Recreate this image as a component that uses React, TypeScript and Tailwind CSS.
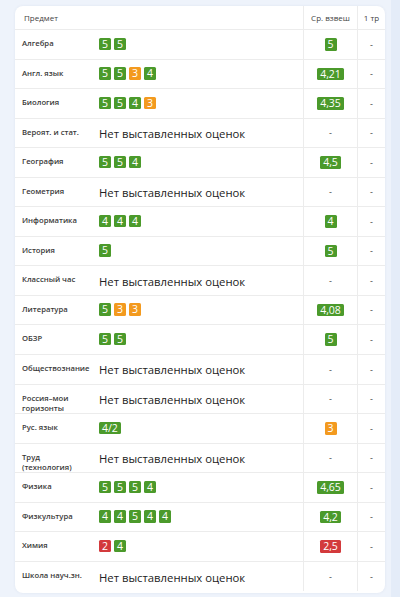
import React from "react";

type Row = {
  name: string;
  marks: string[] | null;
  avg: string | null;
};

const rows: Row[] = [
  { name: "Алгебра", marks: ["5", "5"], avg: "5" },
  { name: "Англ. язык", marks: ["5", "5", "3", "4"], avg: "4,21" },
  { name: "Биология", marks: ["5", "5", "4", "3"], avg: "4,35" },
  { name: "Вероят. и стат.", marks: null, avg: null },
  { name: "География", marks: ["5", "5", "4"], avg: "4,5" },
  { name: "Геометрия", marks: null, avg: null },
  { name: "Информатика", marks: ["4", "4", "4"], avg: "4" },
  { name: "История", marks: ["5"], avg: "5" },
  { name: "Классный час", marks: null, avg: null },
  { name: "Литература", marks: ["5", "3", "3"], avg: "4,08" },
  { name: "ОБЗР", marks: ["5", "5"], avg: "5" },
  { name: "Обществознание", marks: null, avg: null },
  { name: "Россия–мои\nгоризонты", marks: null, avg: null },
  { name: "Рус. язык", marks: ["4/2"], avg: "3" },
  { name: "Труд\n(технология)", marks: null, avg: null },
  { name: "Физика", marks: ["5", "5", "5", "4"], avg: "4,65" },
  { name: "Физкультура", marks: ["4", "4", "5", "4", "4"], avg: "4,2" },
  { name: "Химия", marks: ["2", "4"], avg: "2,5" },
  { name: "Школа науч.зн.", marks: null, avg: null },
];

// green for good marks, orange for threes, red for low
const markColor = (v: string) => {
  const n = parseFloat(v.replace(",", "."));
  if (n >= 3.5) return "bg-[#4b9a2b]";
  if (n >= 3) return "bg-[#f39a1f]";
  return "bg-[#d33a3c]";
};

const Mark = ({ value, wide }: { value: string; wide?: boolean }) => (
  <span
    className={`flex h-[12.5px] items-center justify-center rounded-[1.5px] text-[10.5px] leading-none text-white ${
      wide ? "px-[3px]" : "w-[12px]"
    } ${markColor(value)}`}
  >
    {value}
  </span>
);

export default function App() {
  return (
    <div
      className="flex h-[597px] w-[400px] overflow-hidden bg-[#eef3fb]"
      style={{ fontFamily: '"Open Sans", "Noto Sans", sans-serif' }}
    >
      <div className="ml-[15px] mt-[6px] h-[587px] w-[370px] overflow-hidden rounded-[8px] bg-white shadow-[0_0_3px_rgba(60,80,120,0.08)]">
        {/* Header */}
        <div className="grid h-[24px] grid-cols-[82px_206px_54px_28px] border-b border-[#ececec] text-[8px] text-[#444]">
          <div className="flex items-center pl-[9px]">Предмет</div>
          <div />
          <div className="flex items-center justify-center border-l border-[#ececec]">
            Ср. взвеш
          </div>
          <div className="flex items-center justify-center border-l border-[#ececec]">
            1 тр
          </div>
        </div>

        {/* Rows */}
        {rows.map((r) => (
          <div
            key={r.name}
            className="grid h-[29.55px] grid-cols-[82px_206px_54px_28px] border-b border-[#ececec] last:border-b-0"
          >
            <div className="whitespace-pre-line pl-[7px] pt-[8px] text-[7.7px] font-semibold leading-[10.5px] text-[#3a3a3a]">
              {r.name}
            </div>
            <div className="flex items-center pl-[2px]">
              {r.marks ? (
                <div className="flex gap-[3px] pb-[1px]">
                  {r.marks.map((m, i) => (
                    <Mark key={i} value={m} wide={m.length > 1} />
                  ))}
                </div>
              ) : (
                <span className="pt-[3px] text-[11.3px] text-[#222]">
                  Нет выставленных оценок
                </span>
              )}
            </div>
            <div className="flex items-center justify-center border-l border-[#ececec]">
              {r.avg ? (
                <Mark value={r.avg} wide={r.avg.length > 1} />
              ) : (
                <span className="text-[9px] text-[#444]">-</span>
              )}
            </div>
            <div className="flex items-center justify-center border-l border-[#ececec] text-[9px] text-[#444]">
              -
            </div>
          </div>
        ))}
      </div>
      <div className="ml-[6px] w-[9px] bg-[#e4ecf8]" />
    </div>
  );
}
